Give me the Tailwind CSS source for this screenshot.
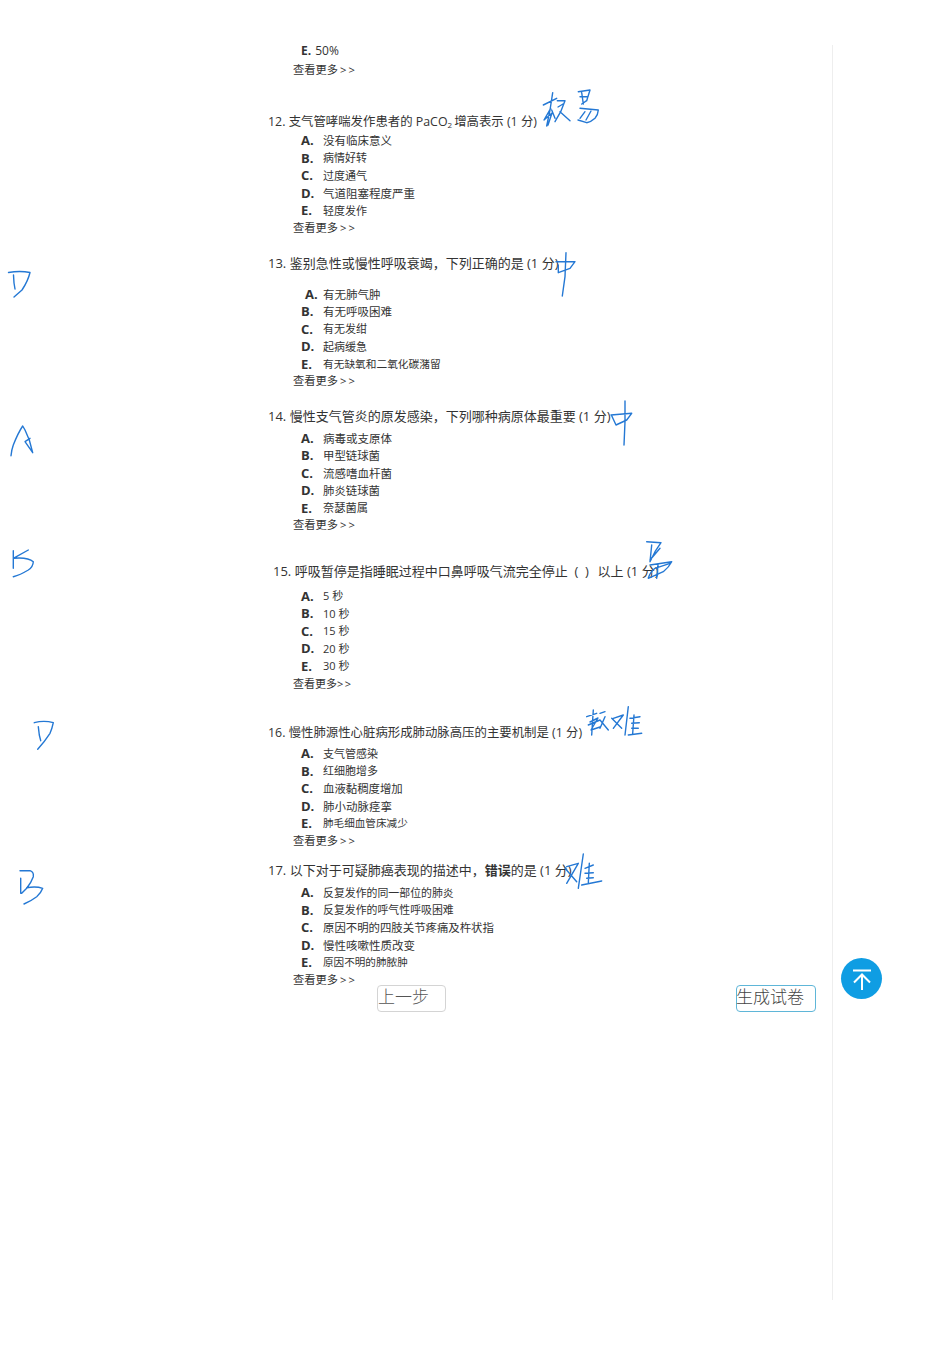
<!DOCTYPE html>
<html lang="zh-CN">
<head>
<meta charset="UTF-8">
<title>生成试卷</title>
<script src="https://cdn.jsdelivr.net/npm/@tailwindcss/browser@4"></script>
</head>
<body class="bg-white">
<div class="relative w-[950px] h-[1346px] overflow-hidden text-[#333] font-['Open_Sans','Noto_Sans_CJK_SC',sans-serif]">

  <!-- page column, the grey line on the right is its border -->
  <div class="absolute left-0 top-[45px] w-[833px] h-[1255px] border-r border-[#eeeeee]"></div>

  <div class="relative pl-[268px] pt-[42px]">
    <div class="flex items-center h-[17.5px] pl-[33px]"><b class="text-[12px] mr-[4px]">E.</b><span class="text-[12px]">50%</span></div>
    <a class="block h-[18px] pl-[25px] text-[11.25px] leading-[19px]">查看更多<span class="ml-[2px] tracking-[2px]">&gt;&gt;</span></a>

    <!-- 12 -->
    <p class="mt-[34.5px] h-[20px] text-[12.4px] leading-[20px]">12. 支气管哮喘发作患者的 PaCO<sub class="text-[8px] mr-[2px]">2</sub>增高表示 (1 分)</p>
    <div class="flex items-center h-[17.5px] pl-[33px]"><b class="w-[22px] text-[13px]">A.</b><span class="text-[11.5px]">没有临床意义</span></div>
    <div class="flex items-center h-[17.5px] pl-[33px]"><b class="w-[22px] text-[13px]">B.</b><span class="text-[11px]">病情好转</span></div>
    <div class="flex items-center h-[17.5px] pl-[33px]"><b class="w-[22px] text-[13px]">C.</b><span class="text-[11px]">过度通气</span></div>
    <div class="flex items-center h-[17.5px] pl-[33px]"><b class="w-[22px] text-[13px]">D.</b><span class="text-[11.5px]">气道阻塞程度严重</span></div>
    <div class="flex items-center h-[17.5px] pl-[33px]"><b class="w-[22px] text-[13px]">E.</b><span class="text-[11px]">轻度发作</span></div>
    <a class="block h-[17px] -mt-[1px] pl-[25px] text-[11.25px] leading-[17px]">查看更多<span class="ml-[2px] tracking-[2px]">&gt;&gt;</span></a>

    <!-- 13 -->
    <p class="mt-[17.5px] h-[20px] text-[13px] leading-[20px]">13. 鉴别急性或慢性呼吸衰竭，下列正确的是 (1 分)</p>
    <div class="flex items-center h-[17.5px] pl-[37px] mt-[12.5px]"><b class="w-[18px] text-[13px]">A.</b><span class="text-[11.5px]">有无肺气肿</span></div>
    <div class="flex items-center h-[17.5px] pl-[33px]"><b class="w-[22px] text-[13px]">B.</b><span class="text-[11.5px]">有无呼吸困难</span></div>
    <div class="flex items-center h-[17.5px] pl-[33px]"><b class="w-[22px] text-[13px]">C.</b><span class="text-[11px]">有无发绀</span></div>
    <div class="flex items-center h-[17.5px] pl-[33px]"><b class="w-[22px] text-[13px]">D.</b><span class="text-[11px]">起病缓急</span></div>
    <div class="flex items-center h-[17.5px] pl-[33px]"><b class="w-[22px] text-[13px]">E.</b><span class="text-[10.7px]">有无缺氧和二氧化碳潴留</span></div>
    <a class="block h-[17px] -mt-[1.5px] pl-[25px] text-[11.25px] leading-[17px]">查看更多<span class="ml-[2px] tracking-[2px]">&gt;&gt;</span></a>

    <!-- 14 -->
    <p class="mt-[17px] h-[20px] text-[13px] leading-[20px]">14. 慢性支气管炎的原发感染，下列哪种病原体最重要 (1 分)</p>
    <div class="flex items-center h-[17.5px] pl-[33px] mt-[4px]"><b class="w-[22px] text-[13px]">A.</b><span class="text-[11.5px]">病毒或支原体</span></div>
    <div class="flex items-center h-[17.5px] pl-[33px]"><b class="w-[22px] text-[13px]">B.</b><span class="text-[11.4px]">甲型链球菌</span></div>
    <div class="flex items-center h-[17.5px] pl-[33px]"><b class="w-[22px] text-[13px]">C.</b><span class="text-[11.5px]">流感嗜血杆菌</span></div>
    <div class="flex items-center h-[17.5px] pl-[33px]"><b class="w-[22px] text-[13px]">D.</b><span class="text-[11.4px]">肺炎链球菌</span></div>
    <div class="flex items-center h-[17.5px] pl-[33px]"><b class="w-[22px] text-[13px]">E.</b><span class="text-[11.25px]">奈瑟菌属</span></div>
    <a class="block h-[17px] -mt-[1px] pl-[25px] text-[11.25px] leading-[17px]">查看更多<span class="ml-[2px] tracking-[2px]">&gt;&gt;</span></a>

    <!-- 15 -->
    <p class="mt-[28px] h-[20px] pl-[5px] text-[13px] leading-[20px]">15. 呼吸暂停是指睡眠过程中口鼻呼吸气流完全停止&nbsp;&nbsp;(&nbsp;&nbsp;)&nbsp;&nbsp;<span class="ml-[2px]">以上</span> (1 分)</p>
    <div class="flex items-center h-[17.5px] pl-[33px] mt-[6.5px]"><b class="w-[22px] text-[13px]">A.</b><span class="text-[11px]">5 秒</span></div>
    <div class="flex items-center h-[17.5px] pl-[33px]"><b class="w-[22px] text-[13px]">B.</b><span class="text-[11px]">10 秒</span></div>
    <div class="flex items-center h-[17.5px] pl-[33px]"><b class="w-[22px] text-[13px]">C.</b><span class="text-[11px]">15 秒</span></div>
    <div class="flex items-center h-[17.5px] pl-[33px]"><b class="w-[22px] text-[13px]">D.</b><span class="text-[11px]">20 秒</span></div>
    <div class="flex items-center h-[17.5px] pl-[33px]"><b class="w-[22px] text-[13px]">E.</b><span class="text-[11px]">30 秒</span></div>
    <a class="block h-[17px] pl-[25px] text-[11px] leading-[17px]">查看更多<span class="tracking-[1.5px]">&gt;&gt;</span></a>

    <!-- 16 -->
    <p class="mt-[30.5px] h-[20px] text-[12.4px] leading-[20px]">16. 慢性肺源性心脏病形成肺动脉高压的主要机制是 (1 分)</p>
    <div class="flex items-center h-[17.5px] pl-[33px] mt-[2.5px]"><b class="w-[22px] text-[13px]">A.</b><span class="text-[11px]">支气管感染</span></div>
    <div class="flex items-center h-[17.5px] pl-[33px]"><b class="w-[22px] text-[13px]">B.</b><span class="text-[11px]">红细胞增多</span></div>
    <div class="flex items-center h-[17.5px] pl-[33px]"><b class="w-[22px] text-[13px]">C.</b><span class="text-[11.4px]">血液黏稠度增加</span></div>
    <div class="flex items-center h-[17.5px] pl-[33px]"><b class="w-[22px] text-[13px]">D.</b><span class="text-[11.5px]">肺小动脉痉挛</span></div>
    <div class="flex items-center h-[17.5px] pl-[33px]"><b class="w-[22px] text-[13px]">E.</b><span class="text-[10.6px]">肺毛细血管床减少</span></div>
    <a class="block h-[17px] -mt-[1px] pl-[25px] text-[11.25px] leading-[17px]">查看更多<span class="ml-[2px] tracking-[2px]">&gt;&gt;</span></a>

    <!-- 17 -->
    <p class="mt-[11px] h-[20px] text-[13px] leading-[20px]">17. 以下对于可疑肺癌表现的描述中，<b>错误</b>的是 (1 分)</p>
    <div class="flex items-center h-[17.5px] pl-[33px] mt-[4.5px]"><b class="w-[22px] text-[13px]">A.</b><span class="text-[10.9px]">反复发作的同一部位的肺炎</span></div>
    <div class="flex items-center h-[17.5px] pl-[33px]"><b class="w-[22px] text-[13px]">B.</b><span class="text-[10.9px]">反复发作的呼气性呼吸困难</span></div>
    <div class="flex items-center h-[17.5px] pl-[33px]"><b class="w-[22px] text-[13px]">C.</b><span class="text-[11.4px]">原因不明的四肢关节疼痛及杵状指</span></div>
    <div class="flex items-center h-[17.5px] pl-[33px]"><b class="w-[22px] text-[13px]">D.</b><span class="text-[11.5px]">慢性咳嗽性质改变</span></div>
    <div class="flex items-center h-[17.5px] pl-[33px]"><b class="w-[22px] text-[13px]">E.</b><span class="text-[10.6px]">原因不明的肺脓肿</span></div>
    <a class="block h-[17px] -mt-[1px] pl-[25px] text-[11.25px] leading-[17px]">查看更多<span class="ml-[2px] tracking-[2px]">&gt;&gt;</span></a>

    <div class="flex -mt-[2.5px]">
      <button class="ml-[109px] w-[69px] h-[27px] border border-[#d4d4d4] rounded-[4px] text-left text-[17px] leading-[21px] self-start flex text-[#555] font-light">上一步</button>
      <button class="ml-[290px] w-[80px] h-[27px] border border-[#5fb6d8] rounded-[4px] text-left text-[17px] leading-[21px] self-start flex text-[#444] font-light -indent-[1px]">生成试卷</button>
    </div>
  </div>

  <!-- back to top -->
  <div class="absolute left-[841px] top-[958px] w-[41px] h-[41px] rounded-full bg-[#0f9de3] flex items-center justify-center">
    <svg width="24" height="24" viewBox="0 0 24 24" fill="none" stroke="white" stroke-width="2"><path d="M3 3.5H21M12 23V8M4 15.5L12 7.5L20 15.5"/></svg>
  </div>

  <!-- handwritten pen marks on top of the page -->
  <svg class="absolute left-0 top-0 pointer-events-none" width="950" height="1346" fill="none" stroke="#2478d4" stroke-width="1.4" stroke-linecap="round" stroke-linejoin="round">
    <path d="M8.5 272.5Q20 270.5 30 272.5Q28 281 22 290L14 297M13.5 275L14 283L15 289"/>
    <path d="M11 455.7Q11.5 450 13.3 445Q18 433 22.7 426L25 430L29.3 440L32.7 452.7L25 441.7L30 438.3"/>
    <path d="M13.3 550.7V568.3M13.3 558.3L28.3 550M13.3 558.3Q28 557 33.3 561.7Q33 567 28.3 570Q20 575 13.3 576.7"/>
    <path d="M34.3 722.7Q44 720 53.3 722.7Q52 729 50 733.3Q45 741 37.7 749.3M38.3 726.7L39.3 735L40.7 740.7"/>
    <path d="M20 870.7H30Q34 872 33.3 876.7Q31 883 26.7 888.3L21.7 893.3M20.7 878.3V893.3M26.7 887.7Q36 886 42.7 888.3Q41 893 36.7 896.7Q31 901 24 904"/>

    <path d="M543.3 105L556.7 98.3M552.7 92.7L550 110L546.7 126M550.7 108.3L544 120L552 113L548 125M551.7 110L555 118.3M557.3 100.7H565L560.7 111.7L555 121.7M558 107L563 104M560 111.7L570 120.7"/>
    <path d="M578.3 91.7L590 90L586.7 100.7L581.7 104M580 96.7H588M581.7 92.7L583.3 104M580 108.3L598.3 110Q598 115 595 118.3Q591 122 586.7 122.7L578 120M585 111.7L580 118.3M591 111L586 120"/>
    <path d="M566 252.7L565 276.7L562.3 296M556 261.7H575L570 268.3L558.3 272.7V265"/>
    <path d="M625 401V421.7L624 445M611 415L631.7 413.3L626.7 420L616 425L611.7 415.7"/>
    <path d="M646.7 541.7L661 542.7L655 551.7L650 561.7M651.7 545L650 561.7M660 548.3L650 560M650 565L671.7 561.7Q669 567 663.3 571.7L648.3 578.3Q650 572 655 568.3L670 563.3M658 565L656.7 578.3"/>
    <path d="M586.7 716.7L596.7 713.3M593.3 710L591.7 735M588.3 725L600 720M590 722L598 718L591 730L600 727M600 713.3L605 711.7M600 720L608.3 730M605 716.7L600 728.3"/>
    <path d="M613.3 718.3L623.3 715L613.3 728.3M611.7 718.3L621.7 728.3"/>
    <path d="M628.3 706.7L625 735M630 718.3L640 716.7M631.7 723.3L639.3 722.7M631.7 728.3H638.3M628.3 735L641.7 733.3M634 715L632.7 733.3"/>
    <path d="M566.7 866.7L578.3 863.3L566.7 883.3M565 868.3L576.7 881.7"/>
    <path d="M583.3 854L578.3 888.3M585 868.3L593.3 865M585 873.3L593.3 872.7M586.7 878.3L593.3 877.7M581.7 885L601.7 881M589.3 863.3L588.3 883.3"/>
  </svg>
</div>
</body>
</html>
